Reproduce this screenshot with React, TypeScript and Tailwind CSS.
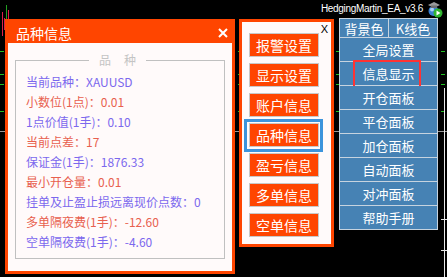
import React from "react";

const rows: { t: string; c: string }[] = [
  { t: "当前品种：XAUUSD", c: "text-[#7b68ee]" },
  { t: "小数位(1点)：0.01", c: "text-[#e8604e]" },
  { t: "1点价值(1手)：0.10", c: "text-[#7b68ee]" },
  { t: "当前点差：17", c: "text-[#e8604e]" },
  { t: "保证金(1手)：1876.33", c: "text-[#7b68ee]" },
  { t: "最小开仓量：0.01", c: "text-[#e8604e]" },
  { t: "挂单及止盈止损远离现价点数：0", c: "text-[#7b68ee]" },
  { t: "多单隔夜费(1手)：-12.60", c: "text-[#e8604e]" },
  { t: "空单隔夜费(1手)：-4.60", c: "text-[#7b68ee]" },
];

const midButtons = ["报警设置", "显示设置", "账户信息", "品种信息", "盈亏信息", "多单信息", "空单信息"];
const rightButtons = ["全局设置", "信息显示", "开仓面板", "平仓面板", "加仓面板", "自动面板", "对冲面板", "帮助手册"];

function Background() {
  return (
    <svg className="absolute inset-0" width="447" height="277" viewBox="0 0 447 277">
      {[51, 74, 84, 111].map((y) => (
        <line key={y} x1="0" y1={y + 0.5} x2="447" y2={y + 0.5} stroke="#22c022" strokeWidth="1" strokeDasharray="4 3" />
      ))}
      <line x1="0" y1="131.5" x2="447" y2="131.5" stroke="#9a9a9a" strokeWidth="1" />
      <line x1="444.5" y1="88" x2="444.5" y2="277" stroke="#e8e8e8" strokeWidth="1" />
      <line x1="441" y1="219.5" x2="447" y2="219.5" stroke="#e8e8e8" strokeWidth="1" />
      <line x1="441" y1="250.5" x2="447" y2="250.5" stroke="#e8e8e8" strokeWidth="1" />
      <line x1="2.5" y1="12" x2="2.5" y2="36" stroke="#e0204a" strokeWidth="1" />
      <line x1="4.5" y1="18" x2="4.5" y2="30" stroke="#e0204a" strokeWidth="1" />
      <line x1="6.5" y1="5" x2="6.5" y2="20" stroke="#22a022" strokeWidth="1" />
      <line x1="8.5" y1="10" x2="8.5" y2="24" stroke="#e0204a" strokeWidth="1" />
    </svg>
  );
}

function EaIcon() {
  return (
    <svg width="16" height="17" viewBox="0 0 16 17">
      <circle cx="6.5" cy="10" r="5" fill="#3a7fd0" />
      <circle cx="5" cy="8.5" r="2" fill="#a8d0f5" />
      <polygon points="1,4 7,1 13,4 7,7" fill="#9a9a9a" />
      <rect x="4" y="4.5" width="6" height="2.5" fill="#6e6e6e" />
      <circle cx="11" cy="12" r="4.5" fill="#2fb52f" />
      <polygon points="9.5,9.5 13.5,12 9.5,14.5" fill="#ffffff" />
    </svg>
  );
}

export default function App() {
  return (
    <div className="relative w-[447px] h-[277px] bg-black overflow-hidden font-['Noto_Sans_CJK_SC','Liberation_Sans',sans-serif]">
      <Background />
      <div className="relative flex flex-col">
        <div className="h-[18px] flex items-center justify-end pr-[4px] gap-[4px]">
          <span className="text-white text-[10px] leading-none tracking-[-0.3px] font-['Liberation_Sans',sans-serif]">
            HedgingMartin_EA_v3.6
          </span>
          <EaIcon />
        </div>
        <div className="flex items-start">
          {/* Left panel */}
          <div className="mt-[1px] ml-[5px] w-[230px] h-[255px] border-[3px] border-[#ff4500] bg-[#fffafa] flex flex-col">
            <div className="h-[21px] bg-[#ff4500] flex items-center justify-between pl-[8px] pr-[4px]">
              <span className="text-white text-[14px] leading-none">品种信息</span>
              <svg width="10" height="10" viewBox="0 0 10 10">
                <path d="M1 1 L9 9 M9 1 L1 9" stroke="#ffffff" strokeWidth="2" />
              </svg>
            </div>
            <div className="relative mt-[17px] mx-[7px] h-[199px] border border-[#c0c0c0] pt-[11px] pl-[10px]">
              <div className="absolute -top-[9px] left-[73px] px-[10px] bg-[#fffafa] text-[#c4c4c4] text-[12px] leading-[16px] flex">
                <span>品</span>
                <span className="ml-[13px]">种</span>
              </div>
              {rows.map((r) => (
                <div key={r.t} className={`text-[12px] leading-[20px] whitespace-nowrap ${r.c}`}>
                  {r.t}
                </div>
              ))}
            </div>
          </div>

          {/* Middle panel */}
          <div className="relative mt-[1px] ml-[4px] w-[95px] h-[228px] border-[3px] border-[#ff4500] bg-[#fffafa] flex flex-col pt-[11px] pl-[7px] gap-[6px]">
            <span className="absolute top-[0px] right-[3px] text-black text-[11px] leading-[14px] font-['Liberation_Sans',sans-serif]">
              X
            </span>
            {midButtons.map((b, i) => (
              <div key={b} className="relative w-[70px] h-[24px]">
                {i === 3 && (
                  <div className="absolute -left-[5px] -right-[4px] -top-[4px] -bottom-[5px] border-[3px] border-[#3c94dc]" />
                )}
                <div className="relative w-full h-full bg-[#ff4500] border border-[#c8c8c8] flex items-center justify-center text-white text-[14px] leading-none">
                  {b}
                </div>
              </div>
            ))}
          </div>

          {/* Right panel */}
          <div className="ml-[5px] w-[99px] flex flex-col">
            <div className="flex h-[20px]">
              <div className="flex-1 bg-[#4682b4] border border-[#c6d3df] flex items-center justify-center text-white text-[13px] leading-none">
                背景色
              </div>
              <div className="flex-1 bg-[#4682b4] border border-l-0 border-[#c6d3df] flex items-center justify-center text-white text-[13px] leading-none">
                K线色
              </div>
            </div>
            {rightButtons.map((b, i) => (
              <div
                key={b}
                className="relative h-[24px] bg-[#4682b4] border border-t-0 border-[#c6d3df] flex items-center justify-center text-white text-[13px] leading-none"
              >
                {b}
                {i === 1 && (
                  <div className="absolute left-[13px] -top-[2px] w-[68px] h-[28px] border-2 border-[#ff3333]" />
                )}
              </div>
            ))}
          </div>
        </div>
      </div>
    </div>
  );
}
